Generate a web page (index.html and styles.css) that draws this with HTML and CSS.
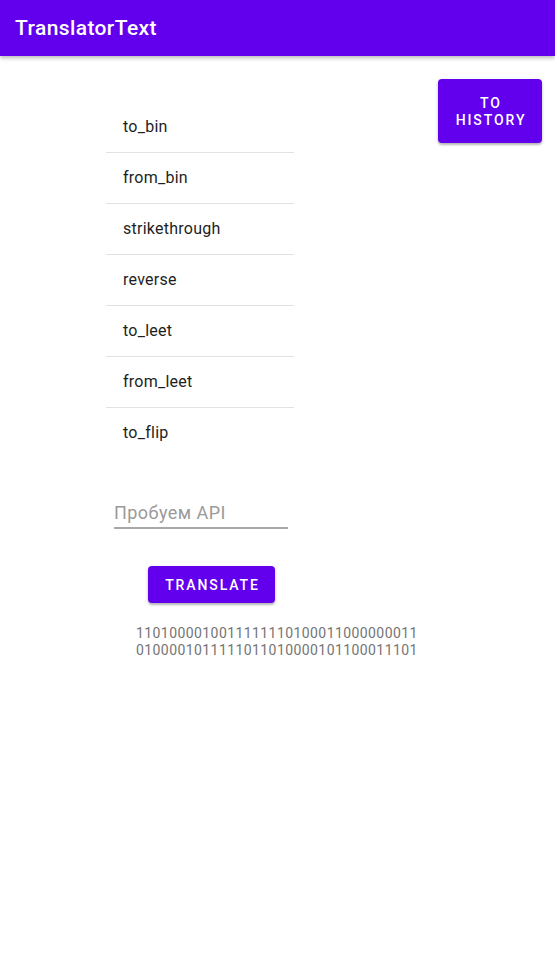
FILE: index.html
```html
<!DOCTYPE html>
<html>
<head>
<meta charset="utf-8">
<link rel="stylesheet" href="styles.css">
</head>
<body>
<header class="appbar"><span class="title">TranslatorText</span></header>
<div class="main">
  <div class="left">
    <ul class="list">
      <li>to_bin</li>
      <li>from_bin</li>
      <li>strikethrough</li>
      <li>reverse</li>
      <li>to_leet</li>
      <li>from_leet</li>
      <li>to_flip</li>
    </ul>
  </div>
  <button class="btn history">TO<br>HISTORY</button>
</div>
<div class="form">
  <div class="edit"><span class="hint">Пробуем API</span></div>
  <button class="btn translate">TRANSLATE</button>
  <div class="output">1101000010011111110100011000000011<br>0100001011111011010000101100011101</div>
</div>
</body>
</html>
```
FILE: styles.css
```css
* { box-sizing: border-box; }
html, body { margin: 0; padding: 0; background: #fff; }
body { font-family: Roboto, "Noto Sans", sans-serif; width: 555px; height: 969px; overflow: hidden; }
.appbar {
  height: 56px;
  background: #6200ee;
  box-shadow: 0 2px 4px rgba(0,0,0,0.28);
  display: flex;
  align-items: center;
  padding-left: 15px;
  position: relative;
  z-index: 1;
}
.title { color: #fff; font-size: 21px; font-weight: 500; letter-spacing: 0.4px; }
.main { display: flex; align-items: flex-start; }
.left { padding-left: 106px; padding-top: 46px; }
.list { list-style: none; margin: 0; padding: 0; width: 188px; }
.list li {
  height: 51px;
  border-bottom: 1px solid #e3e3e3;
  padding-left: 17px;
  font-size: 16px;
  letter-spacing: 0.25px;
  line-height: 50px;
  color: #1e1e1e;
}
.list li:last-child { border-bottom: none; height: 50px; }
.btn {
  border: none;
  background: #6200ee;
  color: #fff;
  font-family: Roboto, sans-serif;
  font-weight: 500;
  font-size: 14px;
  letter-spacing: 1.9px;
  border-radius: 4px;
  box-shadow: 0 2px 2px rgba(0,0,0,0.22), 0 1px 4px rgba(0,0,0,0.12);
  padding: 0;
}
.history {
  margin-left: auto;
  margin-right: 13px;
  margin-top: 23px;
  width: 104px;
  height: 64px;
  line-height: 17px;
  padding-top: 1px;
  padding-left: 2px;
}
.form { padding-left: 114px; padding-top: 35px; }
.edit {
  width: 174px;
  height: 36px;
  border-bottom: 2px solid #a8a8a8;
  padding-top: 9px;
}
.hint { font-size: 18px; letter-spacing: 0.45px; line-height: 21px; color: #9a9a9a; display: block; }
.translate {
  display: block;
  margin-left: 34px;
  margin-top: 37px;
  width: 127px;
  height: 37px;
  padding-left: 2px;
}
.output {
  margin-left: 22px;
  margin-top: 22px;
  font-size: 14px;
  letter-spacing: 0.42px;
  line-height: 17px;
  color: #757575;
}
```
